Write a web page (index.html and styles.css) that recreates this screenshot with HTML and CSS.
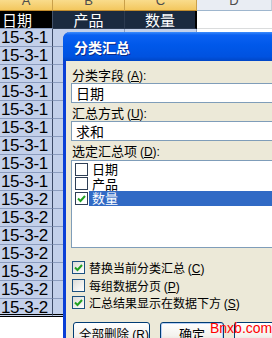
FILE: index.html
```html
<!DOCTYPE html>
<html>
<head>
    <meta charset="utf-8">
    <title>分类汇总</title>
    <link rel="stylesheet" href="styles.css">
</head>
<body>
    <div class="screen">
        <div class="sheet">
            <div class="colhead sel"><span>A</span></div>
            <div class="colhead sel"><span>B</span></div>
            <div class="colhead sel"><span>C</span></div>
            <div class="colhead"><span>D</span></div>

            <div class="cell head-a">日期</div>
            <div class="cell head-b">产品</div>
            <div class="cell head-b head-c">数量</div>
            <div class="cell blank"></div>

            <div class="cell date">15-3-1</div><div class="cell hi"></div><div class="cell hi"></div><div class="cell blank"></div>
            <div class="cell date">15-3-1</div><div class="cell hi"></div><div class="cell hi"></div><div class="cell blank"></div>
            <div class="cell date">15-3-1</div><div class="cell hi"></div><div class="cell hi"></div><div class="cell blank"></div>
            <div class="cell date">15-3-1</div><div class="cell hi"></div><div class="cell hi"></div><div class="cell blank"></div>
            <div class="cell date">15-3-1</div><div class="cell hi"></div><div class="cell hi"></div><div class="cell blank"></div>
            <div class="cell date">15-3-1</div><div class="cell hi"></div><div class="cell hi"></div><div class="cell blank"></div>
            <div class="cell date">15-3-1</div><div class="cell hi"></div><div class="cell hi"></div><div class="cell blank"></div>
            <div class="cell date">15-3-1</div><div class="cell hi"></div><div class="cell hi"></div><div class="cell blank"></div>
            <div class="cell date">15-3-1</div><div class="cell hi"></div><div class="cell hi"></div><div class="cell blank"></div>
            <div class="cell date">15-3-2</div><div class="cell hi"></div><div class="cell hi"></div><div class="cell blank"></div>
            <div class="cell date">15-3-2</div><div class="cell hi"></div><div class="cell hi"></div><div class="cell blank"></div>
            <div class="cell date">15-3-2</div><div class="cell hi"></div><div class="cell hi"></div><div class="cell blank"></div>
            <div class="cell date">15-3-2</div><div class="cell hi"></div><div class="cell hi"></div><div class="cell blank"></div>
            <div class="cell date">15-3-2</div><div class="cell hi"></div><div class="cell hi"></div><div class="cell blank"></div>
            <div class="cell date">15-3-2</div><div class="cell hi"></div><div class="cell hi"></div><div class="cell blank"></div>
            <div class="cell date last">15-3-2</div><div class="cell hi last"></div><div class="cell hi last"></div><div class="cell blank"></div>
        </div>

        <div class="dialog">
            <div class="titlebar">分类汇总</div>
            <div class="dialog-body">
                <div class="label">分类字段 <span class="key">(<u>A</u>):</span></div>
                <div class="field">日期</div>

                <div class="label">汇总方式 <span class="key">(<u>U</u>):</span></div>
                <div class="field">求和</div>

                <div class="label label-list">选定汇总项 <span class="key">(<u>D</u>):</span></div>
                <div class="listbox">
                    <div class="list-item">
                        <span class="list-check"></span>
                        <span class="list-text">日期</span>
                    </div>
                    <div class="list-item">
                        <span class="list-check"></span>
                        <span class="list-text">产品</span>
                    </div>
                    <div class="list-item">
                        <span class="list-check">
                            <svg width="11" height="11" viewBox="0 0 11 11"><path d="M2 5.5 L4.5 8 L9 3" fill="none" stroke="#21a121" stroke-width="2"/></svg>
                        </span>
                        <span class="list-text selected">数量</span>
                    </div>
                </div>

                <div class="options">
                    <div class="option">
                        <span class="checkbox">
                            <svg width="11" height="11" viewBox="0 0 11 11"><path d="M2 5.5 L4.5 8 L9 3" fill="none" stroke="#21a121" stroke-width="2"/></svg>
                        </span>
                        <span>替换当前分类汇总 <span class="key">(<u>C</u>)</span></span>
                    </div>
                    <div class="option">
                        <span class="checkbox"></span>
                        <span>每组数据分页 <span class="key">(<u>P</u>)</span></span>
                    </div>
                    <div class="option">
                        <span class="checkbox">
                            <svg width="11" height="11" viewBox="0 0 11 11"><path d="M2 5.5 L4.5 8 L9 3" fill="none" stroke="#21a121" stroke-width="2"/></svg>
                        </span>
                        <span>汇总结果显示在数据下方 <span class="key">(<u>S</u>)</span></span>
                    </div>
                </div>

                <div class="buttons">
                    <div class="button btn-remove">全部删除<span class="key"> (<u>R</u>)</span></div>
                    <div class="button btn-ok">确定</div>
                    <div class="button btn-cancel">取消</div>
                </div>
            </div>
        </div>

        <div class="watermark">Bnxb.com</div>
    </div>
</body>
</html>
```

FILE: styles.css
```css
* {
    box-sizing: border-box;
}
body {
    margin: 0;
    width: 272px;
    height: 338px;
    overflow: hidden;
    background: #fff;
    font-family: "Noto Sans CJK SC", "Liberation Sans", sans-serif;
}
.screen {
    position: relative;
    width: 272px;
    height: 338px;
    overflow: hidden;
}

/* spreadsheet behind the dialog */
.sheet {
    display: grid;
    grid-template-columns: 53px 72px 72px 75px;
    grid-template-rows: 11px repeat(17, 18px);
    align-content: start;
}
.colhead {
    height: 11px;
    background: #e9edf3;
    border-right: 1px solid #c5cdd8;
    border-bottom: 1px solid #9eb6ce;
    color: #4d4d4d;
    font-family: "Liberation Sans", sans-serif;
    font-size: 13px;
    text-align: center;
    overflow: hidden;
}
.colhead span { display: block; line-height: 13px; margin-top: -6px; }
.colhead.sel {
    background: linear-gradient(#f9dc8c, #f3c75e);
    border-right: 1px solid #c9a04a;
    border-bottom: 1px solid #c08a2c;
}
.cell {
    height: 18px;
    overflow: hidden;
    border-right: 1px solid #8c9dbf;
    border-bottom: 1px solid #8c9dbf;
}
.head-a {
    background: #000;
    color: #fff;
    font-size: 15px;
    line-height: 17px;
    padding-left: 2px;
    border-right: 1px solid #44536b;
}
.head-b {
    background: #1b2a3f;
    color: #fff;
    font-size: 15px;
    line-height: 17px;
    text-align: center;
    border-right: 1px solid #2c3a50;
    border-bottom: 1px solid #2c3a50;
}
.head-c { border-right: 2px solid #000; }
.blank { background: #fff; border-right: none; border-bottom: 1px solid #dadcdd; }
.date {
    background: #c3d0ea;
    color: #000;
    font-family: "Liberation Sans", sans-serif;
    font-size: 17px;
    letter-spacing: -0.4px;
    line-height: 17px;
    padding-left: 1px;
    border-right: 1px solid #3c4a66;
}
.hi { background: #c3d0ea; }
.last { border-bottom: 3px double #000; }

/* dialog window */
.dialog {
    position: absolute;
    left: 63px;
    top: 32px;
    width: 240px;
    height: 330px;
    background: #ece9d8;
    border-left: 3px solid #0a3fd6;
    border-radius: 7px 0 0 0;
    font-size: 13px;
    color: #000;
}
.key {
    font-family: "Liberation Sans", sans-serif;
    font-size: 12px;
}
.titlebar {
    height: 29px;
    margin-left: -3px;
    padding-left: 11px;
    border-radius: 7px 0 0 0;
    background: linear-gradient(#3d8dfc 0, #0b61f2 3px, #0058ea 45%, #0052e0 85%, #0046c6 100%);
    color: #fff;
    font-weight: bold;
    font-size: 14px;
    line-height: 30px;
    text-shadow: 1px 1px 0 #0a2a8a;
}
.dialog-body {
    padding: 5px 0 0 5px;
}
.label {
    height: 17px;
    line-height: 17px;
    padding-left: 1px;
    white-space: nowrap;
}
.field {
    height: 20px;
    margin: 0 0 1px 0;
    background: #fff;
    border: 1px solid #7f9db9;
    border-right: none;
    padding-left: 4px;
    line-height: 18px;
    font-size: 14px;
}
.label-list { margin-bottom: 1px; }
.listbox {
    height: 88px;
    background: #fff;
    border: 1px solid #7f9db9;
    border-right: none;
    padding-top: 1px;
}
.list-item {
    display: flex;
    align-items: center;
    height: 14.5px;
    padding-left: 3px;
    font-size: 13px;
}
.list-check {
    display: flex;
    align-items: center;
    justify-content: center;
    width: 13px;
    height: 13px;
    border: 1px solid #2e3e55;
    background: #fff;
}
.list-text {
    flex: 1;
    height: 14.5px;
    line-height: 14.5px;
    padding-left: 3px;
    margin-left: 1px;
}
.list-text.selected {
    background: #316ac5;
    color: #fff;
}
.options {
    margin-top: 11px;
    font-size: 12px;
}
.option {
    display: flex;
    align-items: center;
    gap: 4px;
    height: 17.5px;
    padding-left: 1px;
    white-space: nowrap;
}
.checkbox {
    display: flex;
    align-items: center;
    justify-content: center;
    width: 13px;
    height: 13px;
    border: 1px solid #1c5180;
    background: linear-gradient(135deg, #dcdcd7, #fff);
}
.buttons {
    display: flex;
    gap: 10px;
    margin-top: 10px;
    padding-left: 2px;
}
.button {
    height: 23px;
    border: 1px solid #003c74;
    border-radius: 3px;
    background: linear-gradient(#fff, #f3f2ee 60%, #e3e1d8 90%, #d6d0c5);
    line-height: 21px;
    white-space: nowrap;
}
.btn-remove { width: 82px; padding-left: 5px; font-size: 12.5px; }
.btn-ok {
    width: 73px;
    text-align: center;
    box-shadow: inset 0 0 0 1px #b8d0f6;
}
.btn-cancel { width: 73px; padding-left: 40px; }

.watermark {
    position: absolute;
    left: 210px;
    top: 320px;
    color: #ff0000;
    font-family: "Liberation Sans", sans-serif;
    font-size: 14px;
    line-height: 16px;
}
```
